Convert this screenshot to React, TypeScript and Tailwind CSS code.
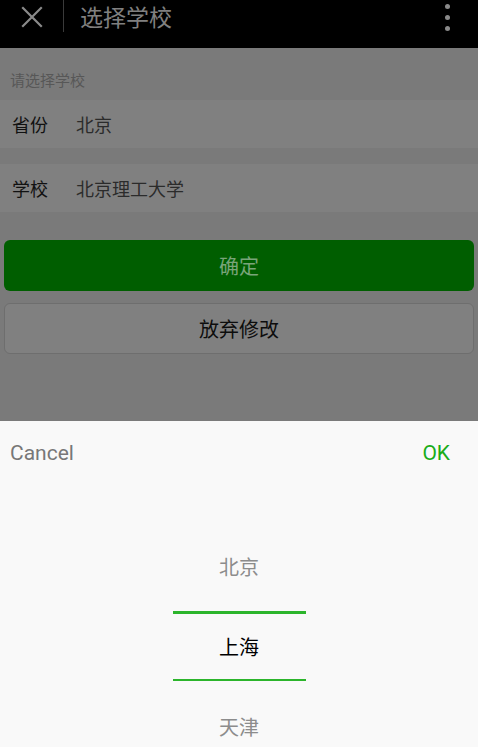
import { useState } from "react";

const FONT = { fontFamily: '"Noto Sans CJK SC", Roboto, "Noto Sans", sans-serif' };

const PROVINCES = ["北京", "上海", "天津"];

function CloseIcon() {
  return (
    <svg width="22" height="22" viewBox="0 0 22 22" aria-hidden="true">
      <path d="M2 2 L20 20 M20 2 L2 20" stroke="#8a8a8a" strokeWidth="2.2" strokeLinecap="square" />
    </svg>
  );
}

export default function App() {
  const [selected] = useState(1);

  return (
    <div className="relative w-full h-[747px] overflow-hidden bg-[#7a7a7a]" style={FONT}>
      {/* title bar */}
      <header className="h-12 bg-black">
        <div className="h-[34px] flex items-center">
          <button className="w-[63px] h-full flex items-center justify-center" aria-label="关闭">
            <CloseIcon />
          </button>
          <div className="w-px h-8 self-start bg-[#3a3a3a]" />
          <h1 className="ml-4 flex-1 text-[23px] leading-none text-[#808080] pb-[1px]">选择学校</h1>
          <div className="w-[62px] flex flex-col items-center gap-[6px] pt-[1px]">
            <span className="block w-[5px] h-[5px] rounded-full bg-[#8a8a8a]" />
            <span className="block w-[5px] h-[5px] rounded-full bg-[#8a8a8a]" />
            <span className="block w-[5px] h-[5px] rounded-full bg-[#8a8a8a]" />
          </div>
        </div>
      </header>

      {/* form */}
      <div className="h-[52px] flex items-center pl-[10px] pt-[12px] text-[15px] text-[#575757]">请选择学校</div>
      <div className="h-12 bg-[#808080] flex items-center text-[18px]">
        <span className="w-[76px] pl-3 text-[#111]">省份</span>
        <span className="text-[#2b2b2b]">北京</span>
      </div>
      <div className="h-4" />
      <div className="h-12 bg-[#808080] flex items-center text-[18px]">
        <span className="w-[76px] pl-3 text-[#111]">学校</span>
        <span className="text-[#2b2b2b]">北京理工大学</span>
      </div>

      <div className="px-1 pt-7 flex flex-col gap-3">
        <button className="h-[51px] rounded-[6px] bg-[#005e00] text-[20px] text-[#79a479]">确定</button>
        <button className="h-[51px] rounded-[6px] border border-[#6e6e6e] bg-[#808080] text-[20px] text-[#0d0d0d]">
          放弃修改
        </button>
      </div>

      {/* picker sheet */}
      <div className="absolute left-0 right-0 bottom-0 h-[326px] bg-[#f9f9f9]">
        <div className="h-[66px] flex items-center justify-between pl-[10px] pr-[28px] text-[21px]" style={{ fontFamily: 'Roboto, "Noto Sans", sans-serif' }}>
          <button className="text-[#777]">Cancel</button>
          <button className="text-[#1aad19]">OK</button>
        </div>
        <div className="flex flex-col items-center text-[20px] pt-[56px]">
          <div className="h-12 w-[133px] flex items-center justify-center text-[#8c8c8c]">{PROVINCES[selected - 1]}</div>
          <div className="mt-5 w-[133px] h-[70px] border-t-[3px] border-b-[2px] border-[#2cb52c] flex items-center justify-center text-black">
            {PROVINCES[selected]}
          </div>
          <div className="mt-[22px] h-12 w-[133px] flex items-center justify-center text-[#8c8c8c]">{PROVINCES[selected + 1]}</div>
        </div>
      </div>
    </div>
  );
}
